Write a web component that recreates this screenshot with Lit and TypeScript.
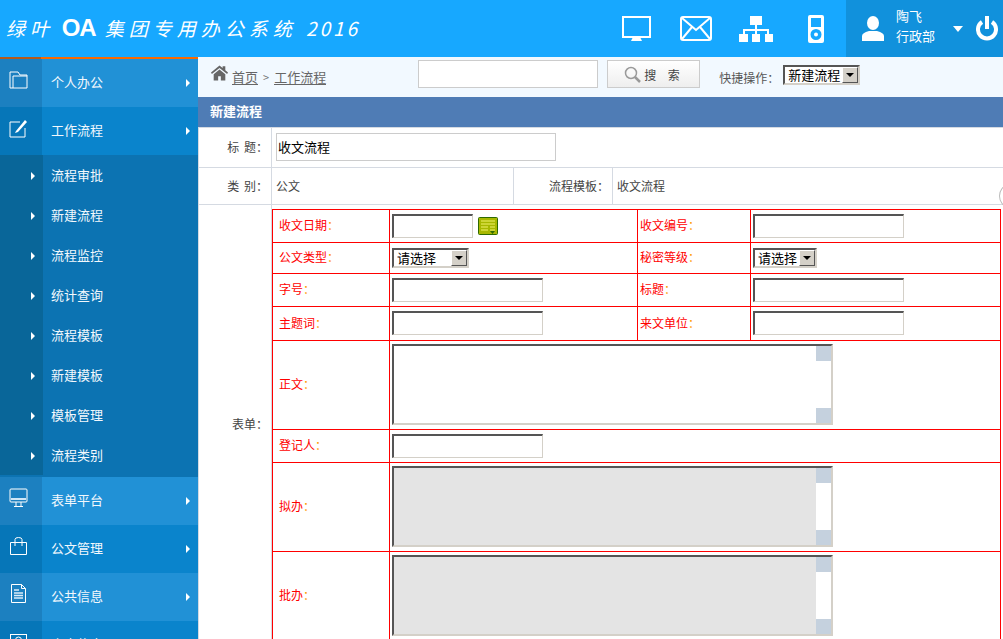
import { LitElement, html, css, svg } from 'lit';
import { customElement } from 'lit/decorators.js';

const subItems = ['流程审批', '新建流程', '流程监控', '统计查询', '流程模板', '新建模板', '模板管理', '流程类别'];

const menuIcons: Record<string, unknown> = {
  folder: svg`<path d="M2 3h8l2 3h7v13H2z M5 7h14 M5 7v12" fill="none" stroke="#fff" stroke-width="1"/>`,
  edit: svg`<path d="M2 5h10M2 5v15h15v-9" fill="none" stroke="#fff" stroke-width="1"/><path d="M8 14l9-11 2 2-9 10-3 1z" fill="#fff"/>`,
  screen: svg`<rect x="2" y="2" width="17" height="13" rx="1" fill="none" stroke="#fff"/><rect x="3" y="11" width="15" height="2" fill="#cfe6f6"/><path d="M8 15v4M13 15v4M6 19.500h9" fill="none" stroke="#fff"/>`,
  bag: svg`<path d="M2.500 7.500h16v12h-16z M7 11V4.500q0-2 3.500-2t3.500 2V11" fill="none" stroke="#fff"/>`,
  doc: svg`<path d="M3.500 1.500h10l4 4v14h-14z M13.500 1.500v4h4" fill="none" stroke="#fff"/><path d="M6 7h5M6 10h9M6 12.500h9M6 15h9" stroke="#dcecf8" stroke-width="1.500"/>`,
  person: svg`<rect x="2.500" y="3.500" width="16" height="15" fill="none" stroke="#fff"/><circle cx="10.500" cy="9" r="3" fill="none" stroke="#fff"/>`,
};

@customElement('app-root')
export class AppRoot extends LitElement {
  static styles = css`
    :host {
      display: block;
      width: 1003px;
      height: 639px;
      overflow: hidden;
      position: relative;
      background: #fff;
      font-family: "Noto Sans CJK SC", "Liberation Sans", sans-serif;
      font-size: 12px;
      color: #444;
    }
    .header {
      height: 57px;
      background: #17a8ff;
      display: flex;
      color: #fff;
    }
    .brand {
      width: 590px;
      padding-left: 6px;
      box-sizing: border-box;
      line-height: 55px;
      font-size: 19px;
      font-style: italic;
      letter-spacing: 5px;
      white-space: nowrap;
    }
    .brand .oa {
      font-family: "Liberation Sans", sans-serif;
      font-style: normal;
      font-weight: 700;
      font-size: 24px;
      letter-spacing: -1px;
      margin: 0 9px 0 2px;
    }
    .brand .year { letter-spacing: 3px; margin-left: 2px; }
    .tools {
      flex: 1;
      display: flex;
      align-items: center;
      padding-left: 32px;
      gap: 29px;
    }
    .tools svg { display: block; }
    .user {
      width: 157px;
      flex: none;
      background: #1191dc;
      display: flex;
      align-items: center;
      padding-left: 16px;
      box-sizing: border-box;
    }
    .who {
      margin-left: 12px;
      margin-top: -6px;
      width: 57px;
      font-size: 13px;
      line-height: 20px;
    }
    .caret {
      width: 0;
      height: 0;
      border: 5px solid transparent;
      border-top: 6px solid #fff;
      border-bottom: 0;
      margin-right: 13px;
    }
    .main { display: flex; height: 582px; }
    .side {
      width: 198px;
      flex: none;
      background: #0a84cc;
      border-top: 2px solid #f96a00;
      border-image: linear-gradient(90deg, #b55a1a 42px, #f96a00 42px) 1;
      box-sizing: border-box;
      color: #f2f8fd;
      font-size: 13px;
    }
    .item { display: flex; height: 48px; align-items: center; background: #0a84cc; }
    .item.light { background: #2191d6; }
    .item .ico {
      width: 42px;
      height: 100%;
      background: #0676b8;
      display: flex;
      padding: 10px 0 0 8px;
      box-sizing: border-box;
    }
    .item.light .ico { background: #1c80c0; }
    .item .name { flex: 1; padding: 0 0 4px 9px; }
    .arrow {
      width: 0;
      height: 0;
      border: 4px solid transparent;
      border-left: 4px solid #fff;
      border-right: 0;
    }
    .item .arrow { margin-right: 8px; }
    .subs { background: #0c73b2; padding-bottom: 2px; }
    .sub { display: flex; align-items: center; height: 40px; }
    .sub .gut {
      width: 43px;
      height: 100%;
      background: #096699;
      display: flex;
      align-items: center;
      padding: 2px 0 0 31px;
      box-sizing: border-box;
    }
    .sub .name { padding: 0 0 2px 8px; }
    .content { flex: 1; min-width: 0; }
    .crumbs {
      height: 40px;
      background: #f2f9ff;
      display: flex;
      align-items: center;
      box-sizing: border-box;
      padding-left: 13px;
    }
    .crumbs a {
      color: #666;
      border-bottom: 1px solid #666;
      line-height: 15px;
      font-size: 13px;
    }
    .crumbs .home { margin-right: 4px; margin-top: -8px; }
    .crumbs .sep { margin: 0 5px; color: #777; font-size: 11px; }
    .search {
      width: 180px;
      height: 28px;
      margin: -6px 9px 0 92px;
      box-sizing: border-box;
      border: 1px solid #ccc;
      background: #fff;
      padding: 0;
    }
    .go {
      width: 93px;
      height: 28px;
      margin-top: -6px;
      box-sizing: border-box;
      border: 1px solid #ccc;
      background: linear-gradient(#fff, #eee);
      display: flex;
      align-items: center;
      padding-left: 16px;
      font: inherit;
      color: #444;
      gap: 3px;
    }
    .go span { word-spacing: 9px; font-size: 12px; }
    .quick { margin-left: 19px; font-size: 12px; color: #555; width: 64px; white-space: nowrap; }
    .title {
      height: 30px;
      line-height: 28px;
      background: #4f7cb5;
      color: #fff;
      font-weight: 700;
      font-size: 13px;
      padding-left: 12px;
    }
    .meta {
      width: 805px;
      border-collapse: collapse;
      table-layout: fixed;
    }
    .meta > tbody > tr > td {
      border: 1px solid #d5dae2;
      padding: 0 4px 2px;
    }
    .meta > tbody > tr > td:last-child { border-right: 0; }
    .meta > tbody > tr > td.lab { text-align: right; padding: 0 3px 2px 0; word-spacing: 2px; }
    .meta tr.r1 > td { height: 37px; }
    .meta tr.r2 > td { height: 34px; }
    .meta { border-top: 1px solid #fff; }
    .meta > tbody > tr > td.pad { padding: 4px 1px 3px 0; vertical-align: top; }
    .ttl {
      width: 280px;
      height: 28px;
      box-sizing: border-box;
      border: 1px solid #ccc;
      font: inherit;
      font-size: 13px;
      color: #000;
      padding: 0 1px;
      display: block;
    }
    .form {
      width: 729px;
      border-collapse: collapse;
      table-layout: fixed;
      color: #f00;
    }
    .form td {
      border: 1px solid #f00;
      padding: 0;
    }
    .form td.l { padding: 0 0 3px 2px; }
    .form td.l:first-child { padding-left: 6px; }
    .form td.in { padding: 0 0 1px 2px; }
    .form i { font-style: normal; color: #f90; }
    .h33 { height: 33px; } .h31 { height: 31px; } .h34 { height: 34px; } .h89 { height: 89px; }
    .txt {
      display: block;
      width: 151px;
      height: 24px;
      box-sizing: border-box;
      border-style: solid;
      border-width: 2px 1px 1px 2px;
      border-color: #555 #d4d0c8 #d4d0c8 #555;
      background: #fff;
      padding: 0;
    }
    .date { width: 81px; }
    .dateline { display: flex; align-items: center; gap: 5px; }
    .drop { position: relative; display: block; height: 20px; width: 77px; }
    .drop.sm { width: 64px; }
    .drop select {
      appearance: none;
      display: block;
      width: 100%;
      height: 20px;
      box-sizing: border-box;
      border: 2px solid;
      border-color: #555 #d4d0c8 #d4d0c8 #555;
      border-radius: 0;
      background: #fff;
      font: inherit;
      font-size: 13px;
      color: #000;
      padding: 0 0 0 3px;
      line-height: 16px;
    }
    .drop .btn {
      position: absolute;
      right: 2px;
      top: 2px;
      width: 16px;
      height: 16px;
      background: #d4d0c8;
      border: 1px solid;
      border-color: #fff #555 #555 #fff;
      box-sizing: border-box;
    }
    .drop .btn::after {
      content: "";
      position: absolute;
      left: 3px;
      top: 5px;
      border: 4px solid transparent;
      border-top: 4px solid #000;
      border-bottom: 0;
    }
    .crumbs .drop { margin-top: -4px; }
    .area {
      position: relative;
      width: 441px;
      height: 81px;
    }
    .area textarea {
      display: block;
      width: 100%;
      height: 100%;
      box-sizing: border-box;
      border: 2px solid;
      border-color: #555 #d4d0c8 #d4d0c8 #555;
      background: #fff;
      resize: none;
      padding: 0;
      overflow: hidden;
    }
    .area.off textarea { background: #e4e4e4; }
    .track {
      position: absolute;
      right: 2px;
      top: 2px;
      bottom: 2px;
      width: 15px;
      background: #fff;
      display: flex;
      flex-direction: column;
      justify-content: space-between;
    }
    .track b { display: block; height: 15px; background: #c5d1de; }
    .knob {
      position: absolute;
      right: -14px;
      top: 185px;
      width: 16px;
      height: 20px;
      border: 1px solid #bbb;
      border-radius: 50%;
      background: #fff;
    }
  `;

  private renderField(label: string) {
    return html`<td class="l">${label}<i>：</i></td>`;
  }

  private renderText() {
    return html`<td class="in"><input class="txt" /></td>`;
  }

  private renderDrop(small = false, value = '请选择') {
    return html`<span class="drop ${small ? 'sm' : ''}"><select><option>${value}</option></select><span class="btn"></span></span>`;
  }

  private renderArea(off = false) {
    return html`<div class="area ${off ? 'off' : ''}"><textarea></textarea><div class="track"><b></b><b></b></div></div>`;
  }

  private renderItem(name: string, icon: string, light: boolean) {
    return html`<div class="item ${light ? 'light' : ''}">
      <div class="ico"><svg width="21" height="21" viewBox="0 0 21 21">${menuIcons[icon]}</svg></div>
      <div class="name">${name}</div>
      <div class="arrow"></div>
    </div>`;
  }

  render() {
    return html`
      <div class="header">
        <div class="brand">绿叶<span class="oa"> OA</span>集团专用办公系统<span class="year"> 2016</span></div>
        <div class="tools">
          <svg width="29" height="26" viewBox="0 0 29 26"><path d="M1 1h27v20H1z" fill="none" stroke="#fff" stroke-width="2"/><path d="M9 25l2-4h7l2 4z" fill="#fff"/></svg>
          <svg width="32" height="25" viewBox="0 0 32 25" fill="none" stroke="#fff" stroke-width="2"><rect x="1" y="1" width="30" height="23" rx="2"/><path d="M2 2l14 12L30 2M2 23l10-12M30 23L20 11"/></svg>
          <svg width="34" height="26" viewBox="0 0 34 26" fill="#fff" style="margin-left:-2px"><rect x="11" y="0" width="12" height="9"/><path d="M16 9h2v5h-2zM4 13h26v2H4zM4 13h2v5H4zM28 13h2v5h-2zM16 13h2v5h-2z"/><rect x="0" y="18" width="9" height="8"/><rect x="13" y="18" width="8" height="8"/><rect x="26" y="18" width="8" height="8"/></svg>
          <svg width="16" height="28" viewBox="0 0 16 28" fill="#fff" style="margin-left:6px" fill-rule="evenodd"><path d="M2 0h12a2 2 0 012 2v24a2 2 0 01-2 2H2a2 2 0 01-2-2V2a2 2 0 012-2zM3 3v9h10V3zM8 14a5.500 5.500 0 100 11 5.500 5.500 0 000-11zM8 17.500a2 2 0 110 4 2 2 0 010-4z"/></svg>
        </div>
        <div class="user">
          <svg width="22" height="25" viewBox="0 0 22 25" fill="#fff"><ellipse cx="11" cy="7" rx="6" ry="7"/><path d="M0 25v-5q0-3 7-5h8q7 2 7 5v5z"/></svg>
          <div class="who">陶飞<br />行政部</div>
          <div class="caret"></div>
          <svg width="22" height="26" viewBox="0 0 22 26" fill="none" stroke="#fff" stroke-width="4"><path d="M6 6a9 9 0 1010 0"/><path d="M11 0v13" stroke-width="4"/></svg>
        </div>
      </div>
      <div class="main">
        <nav class="side">
          ${this.renderItem('个人办公', 'folder', true)}
          ${this.renderItem('工作流程', 'edit', false)}
          <div class="subs">
            ${subItems.map(
              (s) => html`<div class="sub"><div class="gut"><div class="arrow"></div></div><div class="name">${s}</div></div>`
            )}
          </div>
          ${this.renderItem('表单平台', 'screen', true)}
          ${this.renderItem('公文管理', 'bag', false)}
          ${this.renderItem('公共信息', 'doc', true)}
          ${this.renderItem('人事信息', 'person', false)}
        </nav>
        <div class="content">
          <div class="crumbs">
            <svg class="home" width="17" height="16" viewBox="0 0 19 17" fill="#666"><path d="M9.500 0L0 8l1 1.500L9.500 3 18 9.500 19 8l-3-2.500V1h-3v2zM3 10v7h5v-5h3v5h5v-7L9.500 4.500z"/></svg>
            <a>首页</a><span class="sep">&gt;</span><a>工作流程</a>
            <input class="search" />
            <button class="go">
              <svg width="17" height="17" viewBox="0 0 17 17" fill="none" stroke="#999" stroke-width="1.500"><circle cx="7" cy="7" r="5.500"/><path d="M11 11l5 5" stroke-width="2.500"/></svg>
              <span>搜 索</span>
            </button>
            <span class="quick">快捷操作：</span>
            ${this.renderDrop(false, '新建流程')}
          </div>
          <div class="title">新建流程</div>
          <table class="meta">
            <colgroup><col style="width:73px" /><col style="width:242px" /><col style="width:99px" /><col /></colgroup>
            <tr class="r1"><td class="lab">标 题：</td><td colspan="3"><input class="ttl" value="收文流程" /></td></tr>
            <tr class="r2"><td class="lab">类 别：</td><td>公文</td><td class="lab">流程模板：</td><td>收文流程</td></tr>
            <tr>
              <td class="lab">表单：</td>
              <td class="pad" colspan="3">
                <table class="form">
                  <colgroup><col style="width:117px" /><col style="width:248px" /><col style="width:113px" /><col /></colgroup>
                  <tr class="h33">${this.renderField('收文日期')}<td class="in"><div class="dateline"><input class="txt date" />
                    <svg width="20" height="18" viewBox="0 0 20 18"><rect x=".5" y=".5" width="19" height="17" rx="1" fill="#a8b800" stroke="#2f6a00"/><path d="M3 4h14M3 7h14M3 10h7M3 13h7M12 10h5M12 13h5" stroke="#f2f26a"/><path d="M12 14h5l-2.500 3z" fill="#2f6a00"/></svg></div></td>
                    ${this.renderField('收文编号')}${this.renderText()}</tr>
                  <tr class="h31">${this.renderField('公文类型')}<td class="in">${this.renderDrop()}</td>${this.renderField('秘密等级')}<td class="in">${this.renderDrop(true)}</td></tr>
                  <tr class="h33">${this.renderField('字号')}${this.renderText()}${this.renderField('标题')}${this.renderText()}</tr>
                  <tr class="h34">${this.renderField('主题词')}${this.renderText()}${this.renderField('来文单位')}${this.renderText()}</tr>
                  <tr class="h89">${this.renderField('正文')}<td class="in" colspan="3">${this.renderArea()}</td></tr>
                  <tr class="h33">${this.renderField('登记人')}<td class="in" colspan="3"><input class="txt" /></td></tr>
                  <tr class="h89">${this.renderField('拟办')}<td class="in" colspan="3">${this.renderArea(true)}</td></tr>
                  <tr class="h89">${this.renderField('批办')}<td class="in" colspan="3">${this.renderArea(true)}</td></tr>
                </table>
              </td>
            </tr>
          </table>
        </div>
      </div>
      <div class="knob"></div>
    `;
  }
}

declare global {
  interface HTMLElementTagNameMap {
    'app-root': AppRoot;
  }
}
